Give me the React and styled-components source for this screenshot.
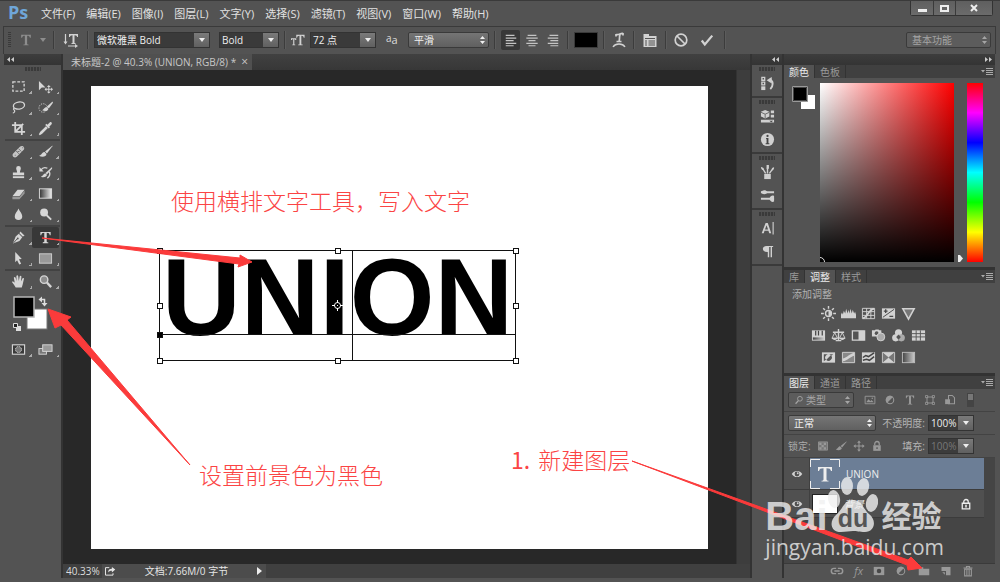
import { useState } from 'react';
import styled, { createGlobalStyle } from 'styled-components';

const GlobalStyle = createGlobalStyle`
  * {
    box-sizing: border-box;
  }

  body {
    margin: 0;
    background: #535353;
    color: #dcdcdc;
    font-family: "Open Sans", "Noto Sans CJK SC", sans-serif;
    font-size: 10px;
    line-height: 12px;
  }

  button, input, select {
    margin: 0;
    padding: 0;
    border: 0;
    border-radius: 0;
    color: inherit;
    font: inherit;
    background: none;
  }

  svg {
    display: block;
    flex: none;
  }
`;

const line = { fill: 'none', stroke: 'currentColor', strokeWidth: 1.4 };

const icons = {
  // toolbox
  marquee: <rect x="2" y="3" width="12" height="10" {...line} strokeDasharray="3 1.7" />,
  move: <><path d="M1 2v10l3-3h4z" /><path d="M11.500 6.500l2 2h-1.500v2h2v-1.500l2 2-2 2v-1.500h-2v2h1.500l-2 2-2-2H11v-2H9V13l-2-2 2-2v1.500h2v-2H9.500z" /></>,
  lasso: <><ellipse cx="8.500" cy="6" rx="6" ry="3.800" {...line} transform="rotate(-10 8 6)" /><path d="M3 8.500c-1.500 2 1.500 2 1 3.500s-1.500 2-2 1.500" {...line} strokeWidth="1.200" /></>,
  quick: <><circle cx="5.500" cy="8.500" r="4.500" {...line} strokeWidth="1" strokeDasharray="1.300 1.300" /><path d="M15.500 1.500L9.500 7l2 2 4.500-6z" /><path d="M9 7.500c-2 0-2.500 2.500-4.500 3.500 3 1.500 6.500.500 6.500-1.500z" /></>,
  crop: <path d="M4.500 1v10.500H15M1 4.500h10.500V15M5 11l8-8" {...line} strokeWidth="1.900" />,
  dropper: <><path d="M10 4l2.500-2.500c1.500-1 3 .5 2 2L12 6l.7.8-1.200 1.200-3.800-3.800L9 3z" /><path d="M9 6L3 12l-1.500 2.500L4 13l6-6" {...line} strokeWidth="1.500" /></>,
  heal: <><path d="M2.300 10.200l7.500-7.500c2.500-2 5.500 1 3.800 3.500l-7.500 7.500c-2.700 2-5.800-1-3.800-3.500z" fill="#c4c4c4" /><path d="M5.500 7.500l3 3M8 5l3 3M7 8h2M4 12h1M12 4h1" stroke="#6c6c6c" fill="none" /></>,
  brush: <><path d="M15.500 1.500L7.500 8l2 2 5.800-7.500z" /><path d="M7 8.500c-2.500-.5-2.500 3-6 4 3.500 2 8 1 8-1.800z" /></>,
  stamp: <><path d="M5.500 3.500a2.500 2.500 0 0 1 5 0c0 1.800-1 2.200-1 4.500H14v3H2V8h4.500c0-2.300-1-2.700-1-4.500z" /><path d="M2 12h12v2H2z" /></>,
  history: <><path d="M15 2L8 8.500l1.500 1.500L15 4z" /><path d="M8 9c-2.500 0-2 2.500-5 3.500 3 1.500 6.500 0 6.500-2z" /><path d="M3 5.500C5 2.500 8 2.500 10 3.500M12 7c1.500 3 .5 5-2 7" {...line} /><path d="M1.500 2v5h4.500z" /></>,
  eraser: <><path d="M7 4h7.500L9 11H1.500z" /><path d="M1.500 11.700H9l5.500-6.800V8L9 14H1.500z" fill="#999" /></>,
  gradient: <><rect x="1.500" y="3" width="13" height="10" fill="url(#toolGradient)" stroke="#ddd" /></>,
  drop: <path d="M8 1.500c1 3 4 5 4 8.300a4 4 0 0 1-8 0C4 6.500 7 4.500 8 1.500z" />,
  dodge: <><circle cx="6.500" cy="5.800" r="4.200" /><path d="M9 8.500l5 5" {...line} strokeWidth="2" /></>,
  pen: <><path d="M10 1.500l4.500 4.500-2 1L9 3.500z" /><path d="M8.300 4l3.700 3.800-3 4-7 2.700L5 7z" /><path d="M2.500 14l4-4.500" stroke="#535353" /><circle cx="7.200" cy="9" r="1" fill="#535353" /></>,
  type: <path d="M2.500 2h11v3.500h-1C12.200 3.700 11.500 3 9.300 3v9.300c0 .8.700.9 1.700 1v.7H5v-.7c1-.1 1.700-.2 1.700-1V3C4.500 3 3.800 3.700 3.500 5.500h-1z" />,
  arrow: <path d="M4.500 1l7 7.500-3 .3 2.300 4.700-2 1L6.500 9.800 4.500 12z" />,
  rect: <rect x="1.500" y="3" width="13" height="10" fill="#999" stroke="#cfcfcf" />,
  hand: <path d="M5 14.500c-1-2-2.500-4-4-6 .7-1.200 2-.3 3 .8L3 4c.5-1.200 1.700-1 2 .2L6 7.500 5.700 2.300c.3-1.200 1.800-1.200 2 0L8.300 7.500l1-5c.5-1 1.800-.8 1.800.4l-.5 5 1.600-3.200c.8-.8 2-.2 1.500 1L12.500 11l-1 3.500z" />,
  zoom: <><circle cx="6.500" cy="6" r="4" fill="#8d8d8d" stroke="currentColor" strokeWidth="1.500" /><path d="M9.500 9l4.500 5" {...line} strokeWidth="2.500" /></>,
  mask: <><rect x="1.500" y="3" width="13" height="10" fill="#3a3a3a" stroke="currentColor" strokeWidth="1.200" /><circle cx="8" cy="8" r="3.200" fill="#777" stroke="currentColor" strokeDasharray="1.500 1" /></>,
  screen: <><rect x="1" y="7" width="8" height="6" fill="#777" stroke="currentColor" /><rect x="5" y="3" width="10" height="7" fill="#999" stroke="currentColor" /></>,

  // options bar
  orient: <><path d="M6 2h9v3h-1c0-1-.7-1.800-2.500-1.800V11h1v1H8.500v-1h1V3.200C7.700 3.200 7 4 7 5H6z" /><path d="M2.500 2v9M5 14h8" {...line} strokeWidth="1.200" /><path d="M.500 9.500h4l-2 3zM12 12l3 2-3 2z" /></>,
  size: <><path d="M6 2h9.500v3.500h-1c0-1.500-.8-2.300-2.700-2.300V13h1.500v1H8.200v-1h1.500V3.200C7.800 3.200 7 4 7 5.500H6z" /><path d="M0 6h6v2H5c0-.7-.4-1-1.200-1v6h1v1H1.500v-1h1V7C1.500 7 1 7.300 1 8H0z" /></>,
  alignLeft: <path d="M2 2h10v1.500H2zM2 5h12v1.500H2zM2 8h9v1.500H2zM2 11h12v1.500H2zM2 14h9v1H2z" />,
  alignCenter: <path d="M3 2h10v1.500H3zM1.500 5h13v1.500h-13zM4 8h8v1.500H4zM1.500 11h13v1.500h-13zM4 14h8v1H4z" />,
  alignRight: <path d="M4 2h10v1.500H4zM2 5h12v1.500H2zM5 8h9v1.500H5zM2 11h12v1.500H2zM5 14h9v1H5z" />,
  warp: <><path d="M5 2.500C8 3.500 9.500.8 12 1.500M9 2.500c-1 3 0 4-1 7M5.500 9.500h5M5 2v2.500M12 1v2.500" {...line} strokeWidth="1.700" /><path d="M2 15c2.500-4 9.500-4 12 0" {...line} /></>,
  panel: <><path d="M1.500 2H7v2h7.500v11h-13z" /><path d="M3 6.500h10M3 9h2M6.500 9H13M3 11h2M6.500 11H13M3 13h2M6.500 13H13" stroke="#535353" /></>,
  cancel: <><circle cx="8" cy="8" r="5.800" {...line} strokeWidth="1.700" /><path d="M4 4l8 8" {...line} strokeWidth="1.700" /></>,
  check: <path d="M2 8.500l3.500 4.500L14 3" {...line} strokeWidth="2.600" />,

  // collapsed panels
  historyPanel: <><path d="M2 1.500h3v3H2zM2 6.500h3v3H2z" {...line} /><path d="M1.300 11h4.400v4H1.300z" /><path d="M10 4c5 1 4 7 1 10" {...line} strokeWidth="2" /><path d="M7 4.500L12.500 1v7z" /></>,
  properties: <><path d="M5.500 1l4.500 2v5l-4.500 2L1 8V3z" /><path d="M1 3.500l4.500 2 4.500-2M5.500 5.500V10" stroke="#666" fill="none" /><path d="M11.500 1.500H15v3h-3.500zM11.500 6H15v3h-3.500zM1 11.500h14v3H1z" /><path d="M10 12.500h4l-2 1.500z" fill="#444" /></>,
  info: <><circle cx="8" cy="8" r="7" /><path d="M6.500 6.500H9V12h1v1H6v-1h1V7.500h-.5z" fill="#444" /><circle cx="8" cy="4.200" r="1.200" fill="#444" /></>,
  brushPresets: <><path d="M4.500 9.500h7V15h-7z" /><path d="M6 9L3 4M8 9V3M10 9l3-4" {...line} strokeWidth="1.500" /><path d="M1 2c2 0 3.500 1.500 3 3.500C2 5.500 1 4 1 2zM7 0h2.500v4H7zM15 2.500c-2 0-3 1.500-2.500 3.500 1.500-.2 2.700-1.500 2.500-3.500z" /></>,
  brushes: <><path d="M1 4.500h14M1 11.500h14" {...line} strokeWidth="2" /><path d="M1 4.500C2 2.500 6 1 8 4.500 6 8 2 6.500 1 4.500zM10 11.500c1-3 3-4 5-3v6c-2 1-4 0-5-3z" /></>,
  character: <><path d="M6 2h2.300L12 13H9.800L9 10.500H4.800L4 13H1.800zM7 4.500L5.300 9h3.300z" /><path d="M14 1v13.500" {...line} strokeWidth="1.200" /></>,
  paragraph: <path d="M7 2h7v1.200h-1.200V14h-1.500V3.200H9.800V14H8.300V8.500C1.500 9 1.500 2 7 2z" />,

  // adjustments
  sun: <><circle cx="8" cy="8" r="3.200" {...line} strokeWidth="1.500" /><path d="M8 5a3 3 0 0 1 0 6z" /><path d="M8 0v3M8 13v3M0 8h3M13 8h3M2.300 2.300l2 2M11.700 11.700l2 2M13.700 2.300l-2 2M4.300 11.700l-2 2" {...line} strokeWidth="1.500" /></>,
  levels: <path d="M0 13V9l1-2 1 2 1-4 1.500 3 1-5 1.500 5 1-4 1 4 1-5 1.500 5 1-4 1.500 4 1-2 1 3v4z" />,
  curves: <><path d="M1.500 2.500h13v11h-13zM6 2.500v11M10.500 2.500v11M1.500 6h13M1.500 10h13" {...line} strokeWidth="1" /><path d="M2 13c5 0 6-10 12-10" {...line} strokeWidth="1.800" /></>,
  exposure: <><path d="M1 2.500h14v11H1z" /><path d="M2 12L14 3.500" stroke="#484848" /><path d="M3 5.500h4M5 3.500v4M9 11h4" stroke="#484848" strokeWidth="1.400" /></>,
  vibrance: <path d="M2 3h12L8 14z" fill="#777" stroke="currentColor" strokeWidth="1.700" />,
  hue: <><path d="M1 2.500h14v11H1z" /><path d="M5 3v5M8 3v5M12 3v5" stroke="#444" strokeWidth="1.300" /><path d="M2 10h12v2.500H2z" fill="url(#mapGradient)" /></>,
  balance: <><path d="M2 4.500h12M8 1v12M5 13.500h6" {...line} strokeWidth="1.500" /><path d="M4 5l-3 6h6zM12 5l-3 6h6z" {...line} strokeWidth="1" /><path d="M1 10.500h6c0 3-6 3-6 0zM9 10.500h6c0 3-6 3-6 0z" /></>,
  blackWhite: <><path d="M1.500 3h13v10h-13z" {...line} /><path d="M8 3h6v10H8z" /></>,
  photo: <><path d="M1 2.500h3l1-1h3l1 1h2V9H1z" /><circle cx="6" cy="5.500" r="2" fill="#555" /><circle cx="10.500" cy="9.500" r="4.200" fill="#aaa" stroke="currentColor" /></>,
  mixer: <><circle cx="8" cy="5" r="3.800" /><circle cx="5" cy="10.500" r="3.800" /><circle cx="11" cy="10.500" r="3.800" fill="#aaa" /><path d="M8 7l2.500 2.500L8 12.500 5.500 9.500z" fill="#555" /></>,
  lookup: <><path d="M1 2.500h14v11H1z" /><path d="M1 6h14M1 9.500h14M5.500 2.500v11M10 2.500v11" stroke="#555" /></>,
  invert: <><path d="M1 2.500h14v11H1z" /><path d="M3 4.500h10L3 12z" fill="#555" /><path d="M10.500 5.500a3.500 3.500 0 0 1-5 5z" fill="#555" /><path d="M10.500 5.500a3.500 3.500 0 0 0-5 5z" /></>,
  posterize: <><path d="M1.500 2.500h13v11h-13z" fill="#888" stroke="currentColor" /><path d="M2 9c5-1 7-5 12-6v3c-4 1-7 5-12 6z" /></>,
  threshold: <><path d="M1 2.500h14v11H1z" /><path d="M2 8l3-2 3 1 6-4M2 11l4-1 3 1 5-4" stroke="#444" strokeWidth="1.600" fill="none" /></>,
  selective: <><path d="M1.500 2.500h13v11h-13z" fill="#888" stroke="currentColor" /><path d="M2 13l6-5 6 5zM2 3l6 5 6-5z" /><path d="M2 3l6 5-6 5zM14 3L8 8l6 5z" fill="#777" /></>,
  gradientMap: <rect x="1.500" y="2.500" width="13" height="11" fill="url(#mapGradient)" stroke="#bbb" />,

  // layers
  image: <><path d="M1.500 3h13v10h-13z" {...line} strokeWidth="1.200" /><path d="M3 11l3-4 2.500 2.500L10 8l3 3z" /><circle cx="11" cy="5.500" r="1" /></>,
  adjust: <><circle cx="8" cy="8" r="5" {...line} /><path d="M4 12A5.500 5.500 0 0 1 12 4z" /></>,
  shape: <><path d="M4 4h8v8H4z" {...line} strokeWidth="1.200" /><path d="M2 2h3v3H2zM11 2h3v3h-3zM2 11h3v3H2zM11 11h3v3h-3z" {...line} strokeWidth="1" /></>,
  smart: <><path d="M6 2h5l3 3v8H6z" {...line} /><path d="M1.500 7H8v6.500H1.500z" /></>,
  checker: <><path d="M2 2.500h12v11H2z" fill="#777" stroke="currentColor" /><path d="M3 3.500h3v3H3zM9 3.500h3v3H9zM6 6.500h3v3H6zM3 9.500h3v3H3zM9 9.500h3v3H9z" /></>,
  moveAll: <path d="M8 .5l2.500 3H8.700v3.800h3.800V5.500l3 2.500-3 2.500V8.700H8.700v3.800h1.800L8 15.500l-2.500-3h1.800V8.700H3.500v1.800L.5 8l3-2.500v1.800h3.800V3.500H5.500z" />,
  lock: <><path d="M3 7h10v7.500H3z" /><path d="M5 7V5a3 3 0 0 1 6 0v2" {...line} strokeWidth="1.700" /><path d="M7.300 9.500h1.500v2.500H7.300z" fill="#484848" /></>,
  lockOutline: <><path d="M3 7h10v7.500H3z" {...line} strokeWidth="1.700" /><path d="M5 7V5a3 3 0 0 1 6 0v2" {...line} strokeWidth="1.700" /><path d="M7 9h2v3.500H7z" /></>,
  eye: <><path d="M1 8c3-5.500 11-5.500 14 0-3 5.500-11 5.500-14 0z" /><circle cx="8" cy="8" r="3.200" fill="#505050" /><circle cx="9" cy="7" r="1.200" /></>,
  link: <path d="M7 5H4.500a3 3 0 0 0 0 6H7M9 5h2.500a3 3 0 0 1 0 6H9M5 8h6" {...line} strokeWidth="1.700" />,
  addMask: <><path d="M1 2.500h14v11H1z" /><circle cx="8" cy="8" r="3" fill="#484848" /></>,
  folder: <path d="M1 3h6v2h8v8.500H1z" />,
  newLayer: <><path d="M2 2.500h12v11H8V8H2z" /><path d="M3 9.500h3.500V13z" /></>,
  trash: <><path d="M2 4h12M6 3.500V2h4v1.500" {...line} strokeWidth="1.500" /><path d="M3.500 5.500h9v9h-9z" {...line} /><path d="M6.500 6v8M9.500 6v8" {...line} /></>,
  share: <><path d="M7 3.500H2v10h10V11" {...line} strokeWidth="1.300" /><path d="M5.500 10c0-4 2-5 5-5V2.500L15 6l-4.500 4V7.500c-2.500 0-4 .5-5 2.500z" /></>,
  search: <><circle cx="9.500" cy="6" r="3.800" {...line} /><path d="M7 9l-4.500 5" {...line} strokeWidth="2" /></>,
};

const Icon = ({ name, size = 14 }) => (
  <svg width={size} height={size} viewBox="0 0 16 16" fill="currentColor">{icons[name]}</svg>
);

const toolGroups = [
  ['marquee', 'move', 'lasso', 'quick', 'crop', 'dropper'],
  ['heal', 'brush', 'stamp', 'history', 'eraser', 'gradient', 'drop', 'dodge'],
  ['pen', 'type', 'arrow', 'rect'],
  ['hand', 'zoom'],
];

const menus = ['文件(F)', '编辑(E)', '图像(I)', '图层(L)', '文字(Y)', '选择(S)', '滤镜(T)', '视图(V)', '窗口(W)', '帮助(H)'];

const stripGroups = [
  ['historyPanel'],
  ['properties', 'info'],
  ['brushPresets', 'brushes'],
  ['character', 'paragraph'],
];

const adjustments = [
  ['sun', 'levels', 'curves', 'exposure', 'vibrance'],
  ['hue', 'balance', 'blackWhite', 'photo', 'mixer', 'lookup'],
  ['invert', 'posterize', 'threshold', 'selective', 'gradientMap'],
];

function Combo({ label, value, width }) {
  return (
    <ComboBox $width={width}>
      <ComboInput aria-label={label} defaultValue={value} />
      <ComboArrow aria-label={label}><Caret /></ComboArrow>
    </ComboBox>
  );
}

const Caret = () => <svg width="6" height="4" viewBox="0 0 6 4" fill="currentColor"><path d="M0 0h6L3 4z" /></svg>;

function Picker({ id, label, value, width, dim, icon }) {
  return (
    <PickerBox $width={width} $dim={dim}>
      {icon && <Icon name={icon} size={10} />}
      <PickerSelect id={id} aria-label={label}><option>{value}</option></PickerSelect>
      <svg width="5" height="8" viewBox="0 0 5 8" fill="currentColor"><path d="M0 3h5L2.500 0zM0 5h5L2.500 8z" /></svg>
    </PickerBox>
  );
}

function Tabs({ names, initial }) {
  const [active, setActive] = useState(initial);
  return (
    <TabBar>
      {names.map((name) => (
        <Tab key={name} $active={name === active} onClick={() => setActive(name)}>{name}</Tab>
      ))}
      <PanelMenu aria-label="menu">
        <svg width="12" height="8" viewBox="0 0 12 8" fill="currentColor">
          <path d="M0 2h4L2 4.500zM5 0h7v1H5zM5 2h7v1H5zM5 4h7v1H5zM5 6h7v1H5z" />
        </svg>
      </PanelMenu>
    </TabBar>
  );
}

function Swatches() {
  return (
    <SwatchWell width="48" height="42" viewBox="0 0 48 42">
      <rect x="20" y="13" width="20" height="20" fill="#fff" stroke="#777" />
      <rect x="7" y="1" width="20" height="20" fill="#000" stroke="#b5b5b5" strokeWidth="1.500" />
      <path d="M34 3.500h3.500V8" fill="none" stroke="#ddd" strokeWidth="1.500" />
      <path d="M35 .5v6l-3.500-3zM34.500 7h6l-3 3.500z" fill="#ddd" />
      <path d="M9 30h5v5H9z" fill="#ddd" />
      <path d="M6.500 27.500h4v4h-4z" fill="#222" stroke="#ddd" />
    </SwatchWell>
  );
}

function TransformBox() {
  const handles = [[0, 0], [178, 0], [356, 0], [0, 55], [356, 55], [0, 110], [178, 110], [356, 110]];
  return (
    <TextObject>
      <span>UNION</span>
      <svg width="364" height="118" viewBox="-4 -4 364 118" fill="none" stroke="#111" shapeRendering="crispEdges">
        <path d="M.5.5h356v110H.5zM0 84.500h356M193.500 0v110" />
        {handles.map(([x, y]) => (
          <rect key={`${x}-${y}`} x={x - 2} y={y - 2} width="5" height="5" fill="#fff" />
        ))}
        <path d="M-2 82h5v5h-5z" fill="#000" />
        <g stroke="#fff" shapeRendering="auto">
          <circle cx="178.500" cy="55.500" r="3" />
          <path d="M173 55.500h3M181 55.500h3M178.500 50v3M178.500 58v3M178 55.500h1" />
        </g>
      </svg>
    </TextObject>
  );
}

function ColorPanel() {
  return (
    <Panel>
      <Tabs names={['颜色', '色板']} initial="颜色" />
      <ColorBody>
        <svg width="24" height="28" viewBox="0 0 24 28">
          <path d="M9 12h14v14H9z" fill="#fff" />
          <path d="M.5 3.500h15v15H.5z" fill="#000" stroke="#999" />
          <path d="M1.500 4.500h13v13h-13z" fill="#000" stroke="#444" />
        </svg>
        <ColorField>
          <svg width="6" height="6" viewBox="0 0 6 6" fill="none" stroke="#ddd"><path d="M0 1.500a4.500 4.500 0 0 1 4.500 4.500" /></svg>
        </ColorField>
        <HuePointer width="5" height="7" viewBox="0 0 5 7"><path d="M0 0h2l3 3.500L2 7H0z" fill="#eee" /></HuePointer>
        <HueBar />
      </ColorBody>
    </Panel>
  );
}

function LayersPanel() {
  return (
    <Panel $grow>
      <Tabs names={['图层', '通道', '路径']} initial="图层" />
      <LayerControls>
        <Picker label="filter" value="类型" width={66} dim icon="search" />
        <FilterIcons>
          {['image', 'adjust', 'type', 'shape', 'smart'].map((name) => (
            <IconButton key={name} aria-label={name} $dim><Icon name={name} size={12} /></IconButton>
          ))}
        </FilterIcons>
        <FilterToggle aria-label="filter toggle" />
      </LayerControls>
      <LayerControls>
        <Picker label="blend" value="正常" width={88} />
        <ValueField>
          <label htmlFor="opacity">不透明度:</label>
          <ValueBox>
            <ComboInput id="opacity" defaultValue="100%" />
            <ComboArrow aria-label="opacity"><Caret /></ComboArrow>
          </ValueBox>
        </ValueField>
      </LayerControls>
      <LayerControls>
        <LockTools>
          <span>锁定:</span>
          {['checker', 'brush', 'moveAll', 'lock'].map((name) => (
            <IconButton key={name} aria-label={name} $dim><Icon name={name} size={12} /></IconButton>
          ))}
        </LockTools>
        <ValueField $dim>
          <label htmlFor="fill">填充:</label>
          <ValueBox>
            <ComboInput id="fill" defaultValue="100%" disabled />
            <ComboArrow aria-label="fill"><Caret /></ComboArrow>
          </ValueBox>
        </ValueField>
      </LayerControls>
      <LayerList>
        <LayerRow>
          <IconButton aria-label="eye"><Icon name="eye" size={12} /></IconButton>
          <LayerBody $selected>
            <TextThumb>
              <svg width="30" height="30" viewBox="0 0 30 30" fill="none" stroke="#eee">
                <path d="M.5 8V.5H10M20 .5h9.500V8M29.500 22v7.500H20M10 29.500H.5V22" />
                <path d="M8 8h14v4h-1c-.5-2-1.500-2.700-4.500-2.700v11.200c0 1 1 1.200 2 1.300v.7h-7v-.7c1-.1 2-.3 2-1.300V9.300c-3 0-4 .7-4.500 2.700H8z" fill="#eee" stroke="none" />
              </svg>
            </TextThumb>
            <span>UNION</span>
          </LayerBody>
        </LayerRow>
        <LayerRow>
          <IconButton aria-label="eye"><Icon name="eye" size={12} /></IconButton>
          <LayerBody>
            <WhiteThumb />
            <LayerName>背景</LayerName>
            <Icon name="lockOutline" size={12} />
          </LayerBody>
        </LayerRow>
      </LayerList>
      <LayerActions>
        <IconButton aria-label="link" $dim><Icon name="link" /></IconButton>
        <IconButton $dim><em>fx</em></IconButton>
        {['addMask', 'adjust', 'folder', 'newLayer', 'trash'].map((name) => (
          <IconButton key={name} aria-label={name} $dim><Icon name={name} size={12} /></IconButton>
        ))}
      </LayerActions>
    </Panel>
  );
}

function App() {
  const [tool, setTool] = useState('type');
  const [align, setAlign] = useState('alignLeft');

  return (
    <Window>
      <GlobalStyle />
      <MenuBar>
        <Logo>Ps</Logo>
        <MenuList>
          {menus.map((menu) => <MenuItem key={menu}>{menu}</MenuItem>)}
        </MenuList>
        <WindowButtons>
          <WindowButton aria-label="minimize"><svg width="9" height="8" viewBox="0 0 9 8" fill="#eee"><path d="M0 5h9v3H0z" /></svg></WindowButton>
          <WindowButton aria-label="maximize"><svg width="9" height="7" viewBox="0 0 9 7" fill="none" stroke="#eee" strokeWidth="2"><path d="M1 1h7v5H1z" /></svg></WindowButton>
          <WindowButton aria-label="close" $wide><svg width="8" height="8" viewBox="0 0 8 8" stroke="#eee" strokeWidth="2"><path d="M1 1l6 6M7 1L1 7" /></svg></WindowButton>
        </WindowButtons>
      </MenuBar>

      <OptionsBar>
        <BarGrip />
        <OptionButton aria-label="type tool" $width={32} $dim><Icon name="type" /><Caret /></OptionButton>
        <Divider />
        <OptionButton aria-label="orientation" $width={22}><Icon name="orient" size={16} /></OptionButton>
        <Divider />
        <FontFields>
          <Combo label="font" value="微软雅黑 Bold" width={116} />
          <Combo label="style" value="Bold" width={60} />
        </FontFields>
        <Divider />
        <OptionButton aria-label="size" $width={14}><Icon name="size" /></OptionButton>
        <Combo label="font size" value="72 点" width={66} />
        <SmoothLabel htmlFor="smooth"><small>a</small>a</SmoothLabel>
        <Picker id="smooth" value="平滑" width={81} />
        <Divider />
        <AlignButtons>
          {['alignLeft', 'alignCenter', 'alignRight'].map((name) => (
            <AlignButton key={name} aria-label={name} $active={name === align} onClick={() => setAlign(name)}>
              <Icon name={name} />
            </AlignButton>
          ))}
        </AlignButtons>
        <Divider />
        <TextColor aria-label="text color" />
        <Divider />
        <OptionButton aria-label="warp" $width={18}><Icon name="warp" size={16} /></OptionButton>
        <Divider />
        <OptionButton aria-label="panels" $width={20}><Icon name="panel" size={16} /></OptionButton>
        <Divider />
        <OptionButton aria-label="cancel" $width={18}><Icon name="cancel" size={16} /></OptionButton>
        <OptionButton aria-label="commit" $width={24}><Icon name="check" /></OptionButton>
        <Divider />
        <Workspace>
          <Picker label="workspace" value="基本功能" width={85} dim />
        </Workspace>
      </OptionsBar>

      <Workbench>
        <Toolbox>
          <CollapseBar><Chevrons /></CollapseBar>
          <Grip />
          {toolGroups.map((group) => (
            <ToolGroup key={group[0]}>
              {group.map((name) => (
                <ToolButton key={name} aria-label={name} $active={name === tool} onClick={() => setTool(name)}>
                  <Icon name={name} size={15} />
                </ToolButton>
              ))}
            </ToolGroup>
          ))}
          <Swatches />
          <ToolGroup>
            <ToolButton aria-label="mask"><Icon name="mask" size={15} /></ToolButton>
            <ToolButton aria-label="screen"><Icon name="screen" size={15} /></ToolButton>
          </ToolGroup>
        </Toolbox>

        <Document>
          <DocumentTabs>
            <DocumentTab>
              <span>未标题-2 @ 40.3% (UNION, RGB/8) *</span>
              <CloseTab>×</CloseTab>
            </DocumentTab>
          </DocumentTabs>
          <Viewport>
            <Artboard>
              <TransformBox />
            </Artboard>
            <ScrollTrack />
          </Viewport>
          <StatusBar>
            <ZoomLevel aria-label="zoom" defaultValue="40.33%" />
            <StatusInfo>
              <Icon name="share" size={12} />
              <span>文档:7.66M/0 字节</span>
              <svg width="5" height="8" viewBox="0 0 5 8" fill="#eee"><path d="M0 0l5 4-5 4z" /></svg>
            </StatusInfo>
          </StatusBar>
        </Document>

        <PanelStrip>
          <CollapseBar $right><Chevrons /></CollapseBar>
          {stripGroups.map((group) => (
            <StripGroup key={group[0]}>
              <Grip $small />
              {group.map((name) => (
                <StripButton key={name} aria-label={name}><Icon name={name} size={15} /></StripButton>
              ))}
            </StripGroup>
          ))}
        </PanelStrip>

        <Dock>
          <CollapseBar $right><Chevrons flip /></CollapseBar>
          <ColorPanel />
          <Panel>
            <Tabs names={['库', '调整', '样式']} initial="调整" />
            <AdjustBody>
              <AdjustTitle>添加调整</AdjustTitle>
              {adjustments.map((row) => (
                <AdjustRow key={row[0]}>
                  {row.map((name) => (
                    <IconButton key={name} aria-label={name}><Icon name={name} size={15} /></IconButton>
                  ))}
                </AdjustRow>
              ))}
            </AdjustBody>
          </Panel>
          <LayersPanel />
        </Dock>
      </Workbench>

      <Arrows viewBox="0 0 1000 582" preserveAspectRatio="none" fill="#fb3b3b" stroke="#fb3b3b">
        <defs>
          <linearGradient id="toolGradient"><stop stopColor="#333" /><stop offset="1" stopColor="#eee" /></linearGradient>
          <linearGradient id="mapGradient"><stop stopColor="#444" /><stop offset="1" stopColor="#ccc" /></linearGradient>
        </defs>
        <path d="M42 238l198 20v-3l12 7-14 5 1-3z" />
        <path d="M48 309l23 8-4 3 123 145-129-140-6 3z" />
        <path d="M632 461l276 99 3-3 11 11-14 2-1-5z" />
      </Arrows>
      <Note $left="171px" $top="185px">使用横排文字工具，写入文字</Note>
      <Note $left="199px" $top="459px">设置前景色为黑色</Note>
      <Note $left="511px" $top="444px"><b>1.</b>新建图层</Note>

      <Watermark>
        <WatermarkRow>
          <span>Bai</span>
          <svg width="50" height="58" viewBox="0 0 50 58" fill="currentColor">
            <ellipse cx="6" cy="23" rx="6" ry="9" transform="rotate(-10 6 23)" />
            <ellipse cx="19" cy="10" rx="6" ry="9" />
            <ellipse cx="35" cy="11" rx="6" ry="9" transform="rotate(12 35 11)" />
            <ellipse cx="44" cy="27" rx="6" ry="9" transform="rotate(12 44 27)" />
            <path d="M25 24c9 0 10 9 16 14 8 6 6 18-4 18-6 0-8-1-12-1s-7 1-12 1C2 56 1 45 8 39c7-6 8-15 17-15z" />
            <text x="25" y="51" textAnchor="middle" fontSize="25" fontWeight="700" fill="#555">du</text>
          </svg>
          <WatermarkName>经验</WatermarkName>
        </WatermarkRow>
        <WatermarkUrl>jingyan.baidu.com</WatermarkUrl>
      </Watermark>
    </Window>
  );
}

export default App;

const Chevrons = ({ flip }) => (
  <svg width="7" height="5" viewBox="0 0 7 5" fill="#ccc">
    <path d={flip ? 'M0 0l3 2.500L0 5zM4 0l3 2.500L4 5z' : 'M3 0v5L0 2.500zM7 0v5L4 2.500z'} />
  </svg>
);

const Window = styled.div`
  position: relative;
  display: flex;
  flex-direction: column;
  min-height: 100vh;
  overflow: hidden;
  background: #535353;
  border-top: 1px solid #3a3a3a;
`;

const MenuBar = styled.header`
  display: flex;
  height: 25px;
  padding: 0 7px 0 8px;
`;

const Logo = styled.div`
  width: 27px;
  color: #6fa6d8;
  font-size: 18px;
  font-weight: 700;
  line-height: 22px;
`;

const MenuList = styled.nav`
  display: flex;
  flex: 1;
  gap: 11px;
  padding-left: 6px;
`;

const MenuItem = styled.button`
  color: #e2e2e2;
  font-size: 11px;
  white-space: nowrap;
`;

const WindowButtons = styled.div`
  display: flex;
  align-self: flex-start;
  border: 1px solid #333;
  border-top: 0;
  border-radius: 0 0 3px 3px;
`;

const WindowButton = styled.button`
  display: grid;
  place-items: center;
  width: ${(props) => (props.$wide ? 37 : 22)}px;
  height: 14px;
  background: linear-gradient(#5f5f5f, #6b6b6b);

  & + & {
    border-left: 1px solid #3a3a3a;
  }
`;

const OptionsBar = styled.div`
  display: flex;
  align-items: center;
  gap: 5px;
  height: 28px;
  margin: 0 4px 0 3px;
  padding: 0 4px 2px 4px;
  border: 1px solid #3a3a3a;
  border-bottom: 0;
`;

const BarGrip = styled.div`
  width: 3px;
  height: 16px;
  background: repeating-linear-gradient(#3a3a3a 0 1px, #535353 1px 2px);
`;

const Divider = styled.div`
  width: 2px;
  height: 18px;
  border-left: 1px solid #3c3c3c;
  border-right: 1px solid #5c5c5c;
`;

const OptionButton = styled.button`
  display: flex;
  align-items: center;
  justify-content: center;
  gap: 7px;
  width: ${(props) => props.$width}px;
  height: 20px;
  color: ${(props) => (props.$dim ? '#8d8d8d' : '#d2d2d2')};
`;

const FontFields = styled.div`
  display: flex;
  gap: 9px;
`;

const ComboBox = styled.div`
  display: flex;
  width: ${(props) => props.$width}px;
  height: 16px;
  border: 1px solid #333;
  background: #3a3a3a;
`;

const ComboInput = styled.input`
  flex: 1;
  min-width: 0;
  padding-left: 2px;
  color: #eee;

  &:disabled {
    color: #777;
  }
`;

const ComboArrow = styled.button`
  display: grid;
  place-items: center;
  width: 15px;
  color: #eee;
  background: linear-gradient(#7a7a7a, #606060);
`;

const PickerBox = styled.div`
  display: flex;
  align-items: center;
  gap: 2px;
  width: ${(props) => props.$width}px;
  height: 16px;
  padding: 0 3px 0 5px;
  border: 1px solid #3a3a3a;
  border-radius: 2px;
  color: ${(props) => (props.$dim ? '#a5a5a5' : '#f0f0f0')};
  background: ${(props) => (props.$dim ? '#5c5c5c' : 'linear-gradient(#757575, #606060)')};
`;

const PickerSelect = styled.select`
  flex: 1;
  min-width: 0;
  appearance: none;
`;

const SmoothLabel = styled.label`
  display: flex;
  width: 22px;
  padding-left: 5px;
  font-size: 11px;
  line-height: 14px;

  small {
    font-size: 10px;
    line-height: 10px;
  }
`;

const AlignButtons = styled.div`
  display: flex;
  gap: 2px;
`;

const AlignButton = styled.button`
  display: grid;
  place-items: center;
  width: 19px;
  height: 20px;
  border-radius: 2px;
  color: #c4c4c4;
  background: ${(props) => (props.$active ? '#383838' : 'none')};
`;

const TextColor = styled.button`
  width: 24px;
  height: 16px;
  border: 1px solid #3a3a3a;
  background: #000;
`;

const Workspace = styled.div`
  margin-left: auto;
`;

const Workbench = styled.main`
  display: flex;
  flex: 1;
  gap: 2px;
  margin: 0 5px 4px 4px;
  background: #333;
`;

const Toolbox = styled.aside`
  display: flex;
  flex-direction: column;
  flex: none;
  width: 57px;
  background: #535353;
`;

const CollapseBar = styled.div`
  display: flex;
  align-items: center;
  justify-content: ${(props) => (props.$right ? 'flex-end' : 'flex-start')};
  height: 11px;
  padding: 0 3px;
  background: linear-gradient(#3d3d3d, #343434);
`;

const Grip = styled.div`
  width: 16px;
  height: 4px;
  margin: ${(props) => (props.$small ? '2px 7px 1px' : '2px 21px 5px')};
  background: repeating-linear-gradient(90deg, #3a3a3a 0 2px, #4e4e4e 2px 3px);
`;

const ToolGroup = styled.div`
  display: grid;
  grid-template-columns: 27px 27px;
  margin: 0 1px;

  & + & {
    border-top: 2px solid #424242;
  }
`;

const ToolButton = styled.button`
  display: grid;
  place-items: center;
  height: 21px;
  color: #d6d6d6;
  border-radius: 2px;
  background: linear-gradient(135deg, transparent 50%, #aaa 50%) right 0 bottom 3px / 3px 3px no-repeat,
    ${(props) => (props.$active ? '#383838' : 'transparent')};
`;

const SwatchWell = styled.svg`
  margin: 4px 3px 1px;
`;

const Document = styled.section`
  display: flex;
  flex-direction: column;
  flex: 1;
  min-width: 0;
  background: #282828;
`;

const DocumentTabs = styled.div`
  display: flex;
  height: 16px;
  background: linear-gradient(#414141, #373737);
`;

const DocumentTab = styled.div`
  display: flex;
  align-items: center;
  gap: 5px;
  padding: 0 4px 0 8px;
  color: #c8c8c8;
  background: #505050;
  white-space: nowrap;
`;

const CloseTab = styled.button`
  font-size: 12px;
`;

const Viewport = styled.div`
  display: flex;
  flex: 1;
`;

const Artboard = styled.div`
  position: relative;
  flex: 1;
  min-height: 400px;
  margin: 16px 28px 15px;
  background: #fff;
`;

const TextObject = styled.div`
  position: absolute;
  left: 68px;
  top: 164px;
  width: 357px;
  height: 110px;
  padding-left: 3px;
  color: #000;
  font: bold 109px/94px "Liberation Sans", sans-serif;

  > svg {
    position: absolute;
    left: -4px;
    top: -4px;
  }
`;

const ScrollTrack = styled.div`
  width: 14px;
  background: #3d3d3d;
  border-left: 1px solid #333;
`;

const StatusBar = styled.footer`
  display: flex;
  height: 14px;
  background: #404040;
`;

const ZoomLevel = styled.input`
  width: 39px;
  padding-left: 3px;
  color: #ddd;
`;

const StatusInfo = styled.div`
  display: flex;
  align-items: center;
  justify-content: space-between;
  width: 164px;
  padding: 0 4px 0 2px;
  background: #4c4c4c;
  color: #e6e6e6;
`;

const PanelStrip = styled.aside`
  flex: none;
  width: 30px;
  background: #535353;
`;

const StripGroup = styled.div`
  padding-bottom: 1px;
  border-bottom: 2px solid #3a3a3a;
`;

const StripButton = styled.button`
  display: grid;
  place-items: center;
  width: 100%;
  height: 23px;
  color: #d0d0d0;
`;

const Dock = styled.aside`
  display: flex;
  flex-direction: column;
  flex: none;
  width: 211px;
`;

const Panel = styled.section`
  display: flex;
  flex-direction: column;
  flex: ${(props) => (props.$grow ? 1 : 'none')};
  background: #535353;

  & + & {
    margin-top: 3px;
  }
`;

const TabBar = styled.div`
  display: flex;
  height: 13px;
  background: #404040;
`;

const Tab = styled.button`
  padding: 0 5px;
  border-right: 1px solid #333;
  color: ${(props) => (props.$active ? '#ececec' : '#9a9a9a')};
  background: ${(props) => (props.$active ? '#535353' : 'none')};
`;

const PanelMenu = styled.button`
  margin-left: auto;
  padding-right: 2px;
  color: #aaa;
`;

const ColorBody = styled.div`
  display: flex;
  gap: 4px;
  padding: 5px 12px 5px 8px;
`;

const ColorField = styled.div`
  display: flex;
  align-items: flex-end;
  flex: 1;
  height: 179px;
  background: linear-gradient(transparent, #000), linear-gradient(90deg, #fff, #f00);
`;

const HuePointer = styled.svg`
  align-self: flex-end;
`;

const HueBar = styled.div`
  width: 16px;
  background: linear-gradient(#f00, #f0f, #00f, #0ff, #0f0, #ff0, #f00);
`;

const AdjustBody = styled.div`
  padding: 5px 50px 5px 8px;
`;

const AdjustTitle = styled.div`
  padding-bottom: 2px;
  color: #b0b0b0;
`;

const AdjustRow = styled.div`
  display: flex;
  justify-content: center;
  gap: 5px;
  height: 22px;
`;

const IconButton = styled.button`
  display: grid;
  place-items: center;
  color: ${(props) => (props.$dim ? '#999' : '#d2d2d2')};
`;

const LayerControls = styled.div`
  display: flex;
  align-items: center;
  height: 23px;
  padding: 0 21px 0 4px;
  border-bottom: 1px solid #434343;
`;

const FilterIcons = styled.div`
  display: flex;
  gap: 8px;
  margin-left: 10px;
`;

const FilterToggle = styled.button`
  width: 7px;
  height: 14px;
  margin-left: auto;
  border: 1px solid #444;
  background: linear-gradient(#777 50%, #444 50%);
`;

const ValueField = styled.div`
  display: flex;
  align-items: center;
  gap: 3px;
  margin-left: auto;
  color: #b4b4b4;
`;

const ValueBox = styled.div`
  display: flex;
  width: 46px;
  height: 16px;
  border: 1px solid #333;
  background: #3c3c3c;
`;

const LockTools = styled.div`
  display: flex;
  align-items: center;
  gap: 6px;
  color: #aaa;
`;

const LayerList = styled.div`
  flex: 1;
  padding-right: 11px;
  background: #454545;
`;

const LayerRow = styled.div`
  display: grid;
  grid-template-columns: 25px 1fr;
  background: #505050;
  border-bottom: 1px solid #3c3c3c;
`;

const LayerBody = styled.div`
  display: flex;
  align-items: center;
  gap: 6px;
  height: ${(props) => (props.$selected ? 31 : 27)}px;
  padding-right: 12px;
  color: #eee;
  background: ${(props) => (props.$selected ? '#6c7e96' : 'none')};
  border-left: 1px solid #404040;
`;

const TextThumb = styled.div`
  width: 30px;
`;

const WhiteThumb = styled.div`
  width: 26px;
  height: 20px;
  margin-left: 2px;
  background: #fff;
  border: 1px solid #222;
`;

const LayerName = styled.span`
  flex: 1;
  font-style: italic;
`;

const LayerActions = styled.div`
  display: flex;
  align-items: center;
  justify-content: space-between;
  height: 15px;
  padding: 0 21px 0 46px;
  border-top: 1px solid #3a3a3a;

  em {
    font-size: 11px;
  }
`;

const Arrows = styled.svg`
  position: absolute;
  inset: -1px 0 0;
  width: 100%;
  height: calc(100% + 1px);
  pointer-events: none;
`;

const Note = styled.p`
  position: absolute;
  left: ${(props) => props.$left};
  top: ${(props) => props.$top};
  margin: 0;
  color: #fb4444;
  font-family: "Noto Sans CJK SC", sans-serif;
  font-size: 23px;
  font-weight: 300;
  line-height: 28px;
  pointer-events: none;

  b {
    padding-right: 8px;
  }
`;

const Watermark = styled.div`
  position: absolute;
  right: 56px;
  bottom: 22px;
  color: rgba(240, 240, 240, 0.8);
  pointer-events: none;
`;

const WatermarkRow = styled.div`
  display: flex;
  align-items: flex-end;
  font: bold 40px/36px "Liberation Sans", sans-serif;
`;

const WatermarkName = styled.span`
  margin-left: 4px;
  font: bold 30px/40px "Noto Sans CJK SC", sans-serif;
`;

const WatermarkUrl = styled.div`
  font-size: 21px;
  line-height: 26px;
`;
